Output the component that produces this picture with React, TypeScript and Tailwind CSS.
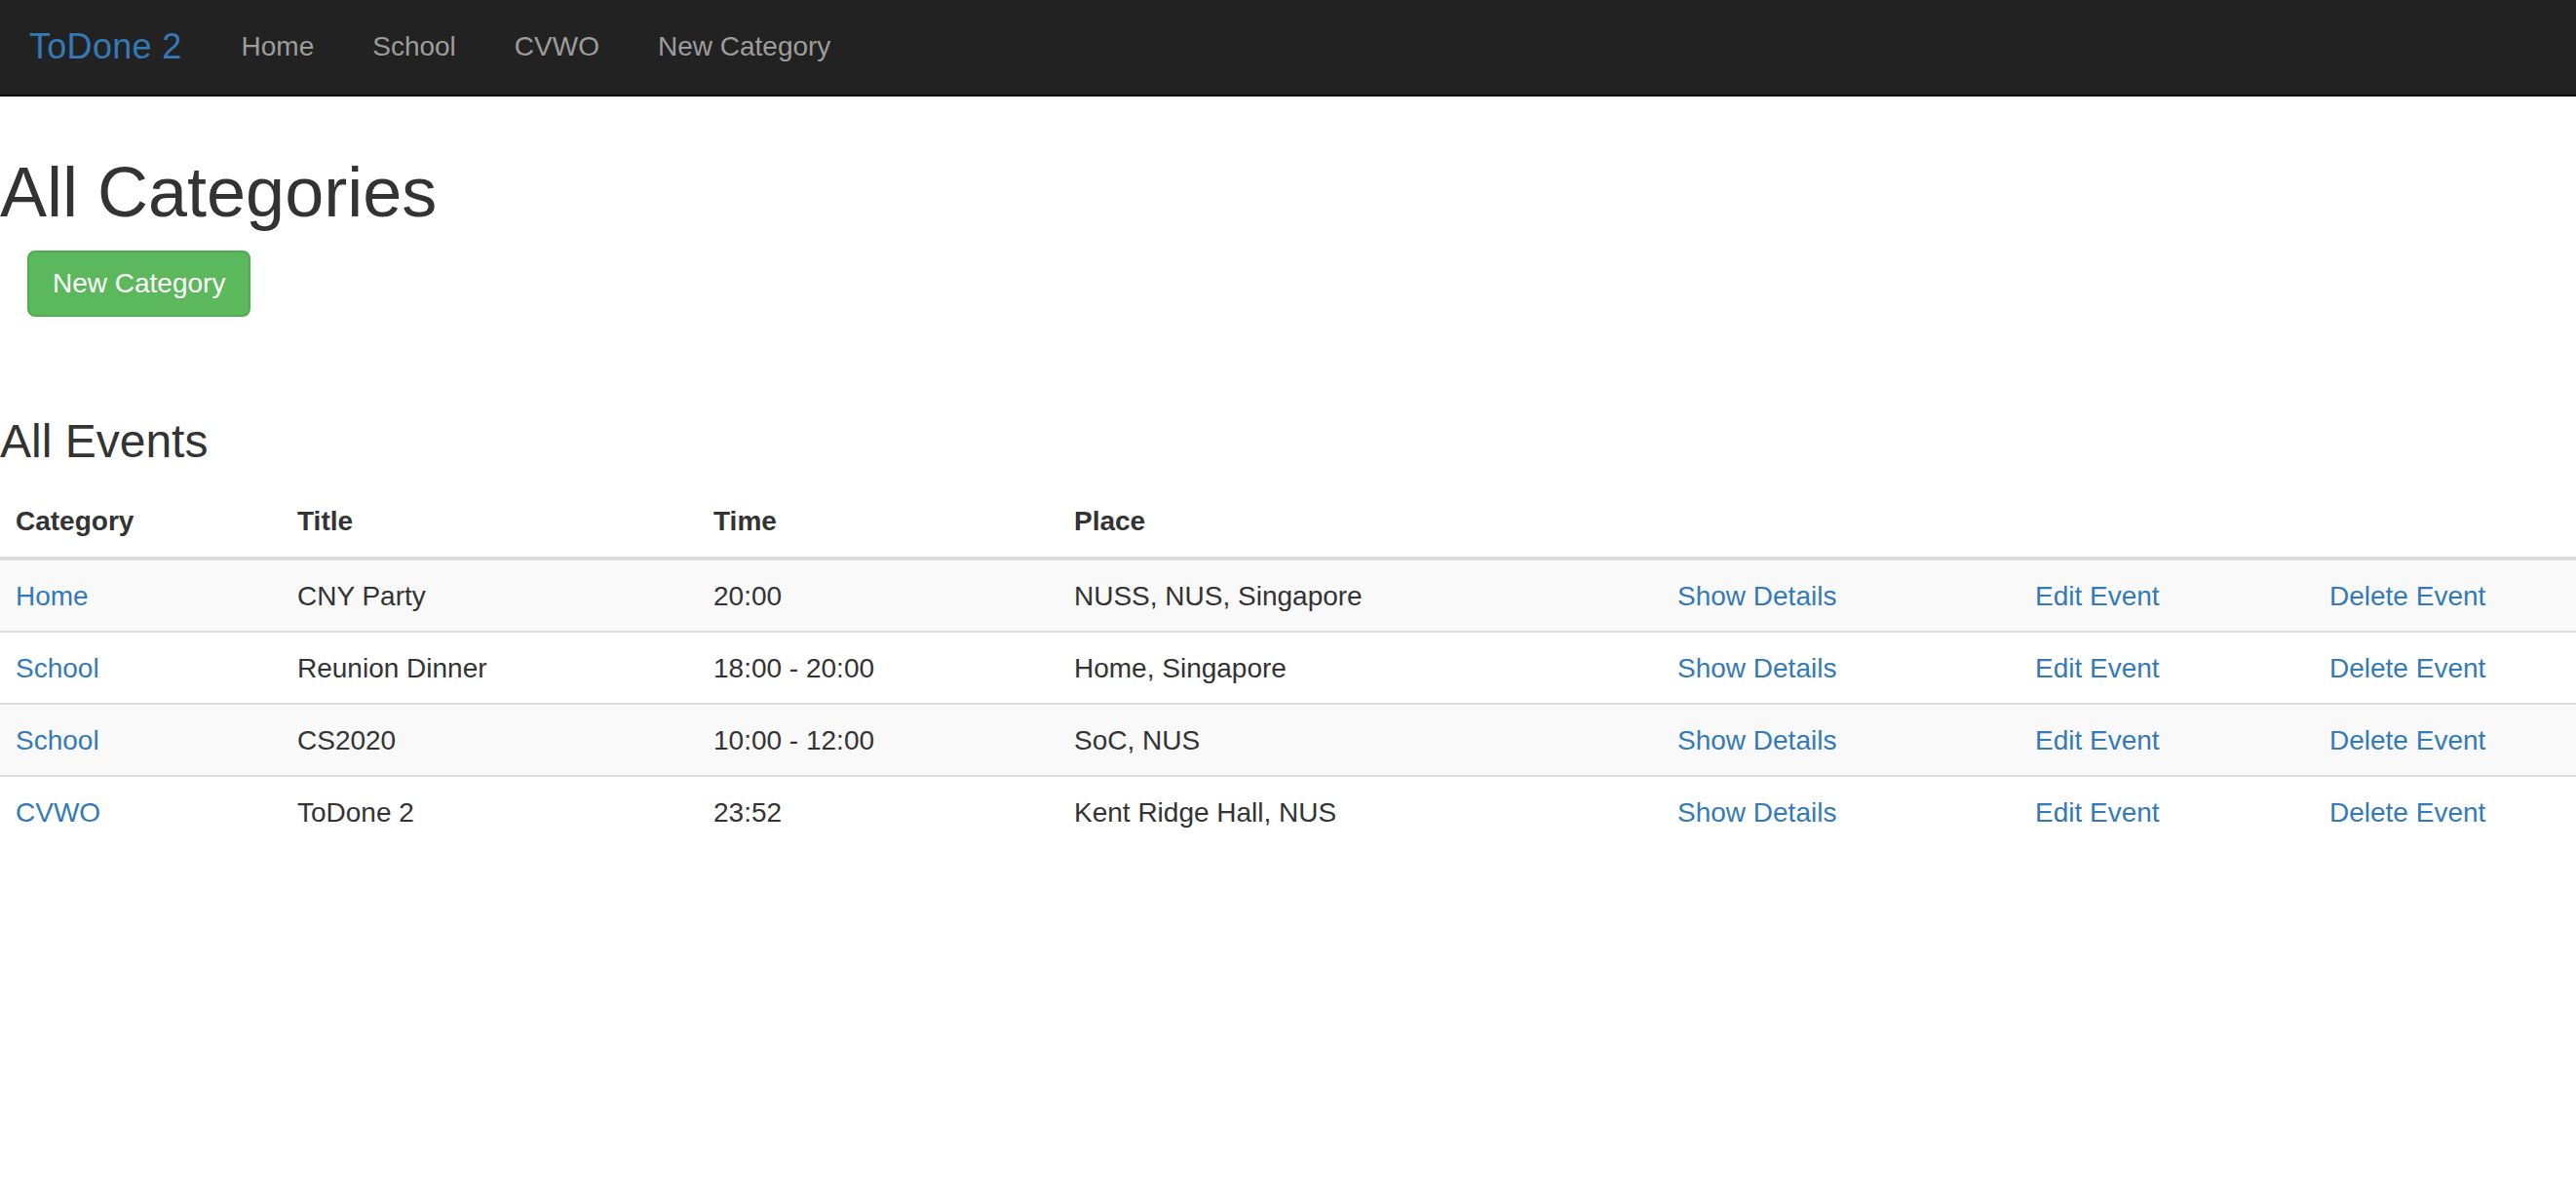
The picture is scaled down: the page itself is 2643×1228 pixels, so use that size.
const links = ['Home', 'School', 'CVWO', 'New Category'];

type EventRow = {
  category: string;
  title: string;
  time: string;
  place: string;
};

const events: EventRow[] = [
  { category: 'Home', title: 'CNY Party', time: '20:00', place: 'NUSS, NUS, Singapore' },
  { category: 'School', title: 'Reunion Dinner', time: '18:00 - 20:00', place: 'Home, Singapore' },
  { category: 'School', title: 'CS2020', time: '10:00 - 12:00', place: 'SoC, NUS' },
  { category: 'CVWO', title: 'ToDone 2', time: '23:52', place: 'Kent Ridge Hall, NUS' },
];

const Navbar = () => (
  <nav className="h-[99px] bg-[#222] border-b-2 border-[#080808] flex">
    <a href="#" className="pl-[30px] pr-[31px] pt-[28px] text-[36px] leading-[40px] tracking-[0.3px] text-[#337ab7]">ToDone 2</a>
    <ul className="flex">
      {links.map((l) => (
        <li key={l}>
          <a href="#" className="block px-[30px] pt-[28px] text-[28px] leading-[40px] text-[#9d9d9d]">{l}</a>
        </li>
      ))}
    </ul>
  </nav>
);

export default function App() {
  return (
    <div className="min-h-screen bg-white text-[#333] font-['Liberation_Sans',Arial,sans-serif]">
      <Navbar />

      <h1 className="mt-[59px] mb-[20px] text-[72px] leading-[79px] font-normal">All Categories</h1>
      <button className="ml-[28px] h-[68px] px-[24px] rounded-[8px] border-2 border-[#4cae4c] bg-[#5cb85c] text-white text-[28px] leading-[40px]">
        New Category
      </button>

      <h3 className="mt-[101px] mb-[20px] text-[48px] leading-[53px] font-normal">All Events</h3>

      <table className="w-full table-fixed border-collapse text-[28px] leading-[40px]">
        <colgroup>
          <col className="w-[289px]" />
          <col className="w-[427px]" />
          <col className="w-[370px]" />
          <col className="w-[619px]" />
          <col className="w-[367px]" />
          <col className="w-[302px]" />
          <col />
        </colgroup>
        <thead>
          <tr className="border-b-4 border-[#ddd]">
            <th className="p-[16px] text-left font-bold">Category</th>
            <th className="p-[16px] text-left font-bold">Title</th>
            <th className="p-[16px] text-left font-bold">Time</th>
            <th className="p-[16px] text-left font-bold">Place</th>
            <th className="p-[16px]"></th>
            <th className="p-[16px]"></th>
            <th className="p-[16px]"></th>
          </tr>
        </thead>
        <tbody>
          {events.map((e, i) => (
            <tr key={i} className={`${i > 0 ? 'border-t-2 border-[#ddd]' : ''} ${i % 2 === 0 ? 'bg-[#f9f9f9]' : 'bg-white'}`}>
              <td className="p-[16px] pt-[17px] pb-[15px]"><a href="#" className="text-[#337ab7]">{e.category}</a></td>
              <td className="p-[16px] pt-[17px] pb-[15px]">{e.title}</td>
              <td className="p-[16px] pt-[17px] pb-[15px]">{e.time}</td>
              <td className="p-[16px] pt-[17px] pb-[15px]">{e.place}</td>
              <td className="p-[16px] pt-[17px] pb-[15px]"><a href="#" className="text-[#337ab7]">Show Details</a></td>
              <td className="p-[16px] pt-[17px] pb-[15px]"><a href="#" className="text-[#337ab7]">Edit Event</a></td>
              <td className="p-[16px] pt-[17px] pb-[15px]"><a href="#" className="text-[#337ab7]">Delete Event</a></td>
            </tr>
          ))}
        </tbody>
      </table>
    </div>
  );
}
